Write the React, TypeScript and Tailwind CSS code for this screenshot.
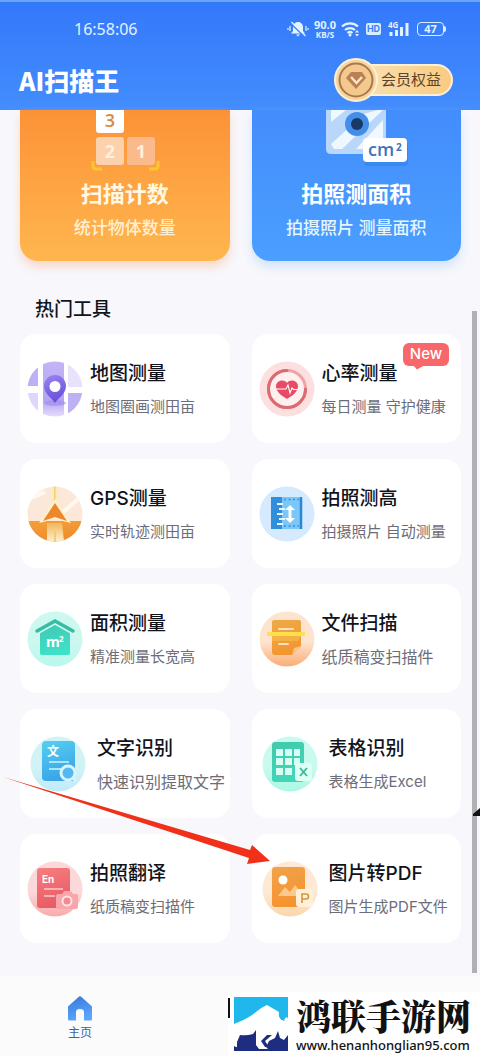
import type { ReactNode } from "react";

function Disc({ id, from, to, children }: { id: string; from: string; to: string; children: ReactNode }) {
  return (
    <svg viewBox="0 0 56 56" className="size-14 shrink-0" aria-hidden="true">
      <defs>
        <linearGradient id={`${id}-bg`} x1="0" y1="0" x2="0" y2="1">
          <stop offset="0.55" stopColor={from} />
          <stop offset="1" stopColor={to} />
        </linearGradient>
        <clipPath id={`${id}-clip`}>
          <circle cx="28" cy="28" r="27.5" />
        </clipPath>
      </defs>
      <circle cx="28" cy="28" r="27.5" fill={`url(#${id}-bg)`} />
      {children}
    </svg>
  );
}

function Gradient({ id, a, b }: { id: string; a: string; b: string }) {
  return (
    <linearGradient id={id} x1="0" y1="0" x2="0.3" y2="1">
      <stop offset="0" stopColor={a} />
      <stop offset="1" stopColor={b} />
    </linearGradient>
  );
}

const MapIcon = () => (
  <Disc id="map" from="#ffffff" to="#ffffff">
    <defs>
      <Gradient id="map-pin" a="#9a86ee" b="#6a4fdc" />
      <linearGradient id="map-road" x1="0" y1="0" x2="0" y2="1">
        <stop offset="0" stopColor="#c3b5f6" />
        <stop offset="0.7" stopColor="#b5a4f2" />
        <stop offset="1" stopColor="#e6defd" />
      </linearGradient>
    </defs>
    <g clipPath="url(#map-clip)">
      <path d="M0 0h11v25H0z" fill="#bfb0f3" />
      <path d="M0 32h11v24H0z" fill="#ded6fb" />
      <path d="M16 0h21v56H16z" fill="url(#map-road)" />
      <path d="M41 0h15v26H41z" fill="#e8e2fd" />
      <path d="M41 32h15v24H41z" fill="#bfb0f3" />
    </g>
    <ellipse cx="28" cy="42" rx="11" ry="3" fill="#9d87eb" opacity="0.6" />
    <path d="M28 42c-3-5-11-9-11-17a11 11 0 0 1 22 0c0 8-8 12-11 17z" fill="url(#map-pin)" />
    <circle cx="28" cy="25.500" r="5.500" fill="#fff" />
  </Disc>
);

const HeartIcon = () => (
  <Disc id="heart" from="#fddfe0" to="#fddfe0">
    <circle cx="28" cy="28" r="18.500" fill="#fff0f0" stroke="#eda4a7" strokeWidth="3" />
    <path d="M46.500 28A18.500 18.500 0 1 1 28 9.500" fill="none" stroke="#dc6b71" strokeWidth="3" strokeLinecap="round" />
    <path d="M28 38c-5-3-11-7-11-12.500 0-6 7.500-8 11-3.500 3.500-4.500 11-2.500 11 3.500C39 31 33 35 28 38z" fill="#e94b66" />
    <path d="M17 28h10l2-4 2 8 2-5 1.500 1.500H39" fill="none" stroke="#fff" strokeWidth="1.100" />
  </Disc>
);

const GpsIcon = () => (
  <Disc id="gps" from="#fce8d9" to="#fce8d9">
    <defs>
      <Gradient id="gps-land" a="#f5a03a" b="#ee8c2c" />
      <linearGradient id="gps-road" x1="0" y1="0" x2="0" y2="1">
        <stop offset="0" stopColor="#f1b75d" />
        <stop offset="1" stopColor="#fdf1cf" />
      </linearGradient>
    </defs>
    <g clipPath="url(#gps-clip)">
      <path d="M34 28 52 12M0 14 18 6" stroke="#fff8ef" strokeWidth="4" />
      <path d="M0 35h56v21H0z" fill="url(#gps-land)" />
      <path d="M25 0h6v20h-6z" fill="#fbecbf" />
      <path d="M20 37h15l2 19H20z" fill="url(#gps-road)" />
      <path d="M27 0h1.500v18H27zM27 42h2v14h-2z" fill="#f4cc79" />
    </g>
    <path d="m28 13 16 24-16-4-16 4z" fill="#fff0ca" />
    <path d="m28 17 12 18-12-4-12 4z" fill="#ed872b" />
  </Disc>
);

const RulerIcon = () => (
  <Disc id="ruler" from="#d5eaff" to="#d5eaff">
    <path d="M12 11h31v32H12z" fill="#7cc7f9" />
    <path d="M12 11h11v32H12z" fill="#318edb" />
    <path d="M18 18h6M20 23h6M18 28h6M20 33h6M18 38h6" stroke="#e8f6ff" strokeWidth="1.800" />
    <path d="M25 13.500h15M25 40h15" stroke="#2c91e1" strokeWidth="1.600" strokeDasharray="2 2.500" />
    <path d="M42 11v32" stroke="#2b87d4" strokeWidth="2.500" />
    <path d="m31 19 5 5h-3.500v8H36l-5 5-5-5h3.500v-8H26z" fill="#fff" />
  </Disc>
);

const HouseIcon = () => (
  <Disc id="house" from="#ccf8ef" to="#b8f8ed">
    <defs>
      <Gradient id="house-body" a="#3fc8b2" b="#3fe0c8" />
    </defs>
    <path d="m13 22 15-9 15 9v20q0 2-2 2H15q-2 0-2-2z" fill="url(#house-body)" />
    <path d="m10 20 18-10 18 10" fill="none" stroke="#ccf8ef" strokeWidth="7" />
    <path d="m10 20 18-10 18 10" fill="none" stroke="#35bda6" strokeWidth="3.500" strokeLinecap="round" />
    <text x="19" y="36" fontSize="14" fontWeight="700" fill="#fff" fontFamily="Open Sans, sans-serif">m</text>
    <text x="32" y="31" fontSize="8" fontWeight="700" fill="#fff" fontFamily="Open Sans, sans-serif">2</text>
  </Disc>
);

const ScanIcon = () => (
  <Disc id="scan" from="#fde4cf" to="#faac74">
    <defs>
      <Gradient id="scan-page" a="#efaa48" b="#f39631" />
    </defs>
    <path d="M15 9h25q2 0 2 2v24l-9 9H16q-3 0-3-3V11q0-2 2-2z" fill="url(#scan-page)" />
    <path d="M20 18h14M20 33h9" stroke="#ffe1ba" strokeWidth="2" strokeLinecap="round" />
    <path d="m33 44 9-9-7 2z" fill="#fbc187" />
    <path d="M13 25h29l-3 5H13z" fill="#fac44e" opacity="0.5" />
    <path d="M8 21h38v4H8z" fill="#ffdf50" />
  </Disc>
);

const TextIcon = () => (
  <Disc id="text" from="#d1f3f5" to="#c0ebfb">
    <defs>
      <Gradient id="text-page" a="#56cfef" b="#3aa5e9" />
    </defs>
    <rect x="12" y="5" width="33" height="40" rx="4" fill="url(#text-page)" />
    <text x="17" y="20" fontSize="12" fontWeight="700" fill="#fff" fontFamily="Noto Sans CJK SC, sans-serif">文</text>
    <path d="M19 26h20M19 33h12" stroke="#a8e6fb" strokeWidth="2" />
    <circle cx="38" cy="37" r="7" fill="#55b8ee" stroke="#d7f4ff" strokeWidth="3" />
    <path d="m43 42 2 2" stroke="#d7f4ff" strokeWidth="3" strokeLinecap="round" />
  </Disc>
);

const TableIcon = () => (
  <Disc id="table" from="#c9faef" to="#aaf8e5">
    <defs>
      <Gradient id="table-page" a="#42c9aa" b="#41d6b8" />
    </defs>
    <rect x="10" y="6" width="32" height="40" rx="3" fill="url(#table-page)" />
    <path
      d="M14 13h7v7h-7zM23 13h7v7h-7zM32 13h6v7h-6zM14 22h7v7h-7zM23 22h7v7h-7zM32 22h6v7h-6zM14 32h7v7h-7zM23 32h7v7h-7z"
      fill="#d9fff5"
    />
    <rect x="33" y="27" width="17" height="18" rx="3" fill="#dffff6" />
    <path d="m38 32 7 8m0-8-7 8" stroke="#38b896" strokeWidth="1.800" />
  </Disc>
);

const TranslateIcon = () => (
  <Disc id="trans" from="#fbd9da" to="#fba9ab">
    <defs>
      <Gradient id="trans-page" a="#f57f80" b="#ea5c65" />
    </defs>
    <rect x="10" y="7" width="33" height="40" rx="3" fill="url(#trans-page)" />
    <text x="15" y="22" fontSize="10" fontWeight="700" fill="#fff" fontFamily="Inter, sans-serif">En</text>
    <path d="M17 28h19M17 35h11" stroke="#f9b2b4" strokeWidth="2" />
    <path d="M31 33h4l2-3h7l2 3h3q2 0 2 2v11q0 2-2 2H31q-2 0-2-2V35q0-2 2-2z" fill="#f8a6ab" />
    <circle cx="40" cy="40" r="4.500" fill="#ef8b92" stroke="#ffe3e5" strokeWidth="2" />
  </Disc>
);

const PictureIcon = () => (
  <Disc id="pic" from="#fee9d4" to="#fbd6ab">
    <defs>
      <Gradient id="pic-page" a="#f0a34c" b="#f6932f" />
    </defs>
    <rect x="10" y="6" width="33" height="40" rx="3" fill="url(#pic-page)" />
    <circle cx="21" cy="19" r="4.500" fill="#fff" />
    <path d="m16 35 7-9 5 5 5-7 9 11z" fill="#fbc88d" />
    <rect x="34" y="28" width="17" height="18" rx="3" fill="#fff0d9" />
    <path d="M40 42v-9h4a2.500 2.500 0 0 1 0 5h-4" fill="none" stroke="#d39545" strokeWidth="1.600" />
  </Disc>
);

type Tool = { title: string; note: string; icon: ReactNode; inset?: boolean; large?: boolean; isNew?: boolean };

const tools: Tool[] = [
  { title: "地图测量", note: "地图圈画测田亩", icon: <MapIcon /> },
  { title: "心率测量", note: "每日测量 守护健康", icon: <HeartIcon />, isNew: true },
  { title: "GPS测量", note: "实时轨迹测田亩", icon: <GpsIcon /> },
  { title: "拍照测高", note: "拍摄照片 自动测量", icon: <RulerIcon /> },
  { title: "面积测量", note: "精准测量长宽高", icon: <HouseIcon /> },
  { title: "文件扫描", note: "纸质稿变扫描件", icon: <ScanIcon />, large: true },
  { title: "文字识别", note: "快速识别提取文字", icon: <TextIcon />, inset: true, large: true },
  { title: "表格识别", note: "表格生成Excel", icon: <TableIcon />, inset: true },
  { title: "拍照翻译", note: "纸质稿变扫描件", icon: <TranslateIcon /> },
  { title: "图片转PDF", note: "图片生成PDF文件", icon: <PictureIcon />, inset: true },
];

function ToolCard({ tool }: { tool: Tool }) {
  return (
    <button
      type="button"
      className={`relative flex items-center rounded-2xl bg-white py-6 text-left whitespace-nowrap ${tool.inset ? "gap-[11px] pl-[10px]" : "gap-[7px] pl-[7px]"}`}
    >
      {tool.icon}
      <span className="flex flex-col gap-[9px] pt-1">
        <span className="text-[19px] leading-6 font-medium text-[#11131b]">{tool.title}</span>
        <span className={`leading-6 text-[#6c6d78] ${tool.large ? "text-[16px]" : "text-[15px]"}`}>{tool.note}</span>
      </span>
      {tool.isNew && (
        <span className="absolute top-[9px] right-3 flex h-[23px] w-[46px] items-center justify-center rounded-md bg-[#f8686b] text-[15px] font-medium text-white">
          New
          <svg viewBox="0 0 12 5" className="absolute top-[22px] left-[10px] h-[5px] w-3" aria-hidden="true">
            <path d="M0 0h12L4 4.500z" fill="#f8686b" />
          </svg>
        </span>
      )}
    </button>
  );
}

function StatusBar() {
  return (
    <div className="flex h-[54px] items-center justify-between pr-[36px] pl-[74px] text-[#e2f3ff]">
      <time className="font-['Noto_Sans',sans-serif] text-[16px]">16:58:06</time>
      <div className="flex items-center gap-[5px]">
        <svg viewBox="0 0 22 18" className="h-[18px] w-[22px]" aria-label="静音">
          <path d="M11 2a5 5 0 0 1 5 5v4l2 2.500H4L6 11V7a5 5 0 0 1 5-5zM9 14.500h4l-2 2z" fill="currentColor" />
          <path d="m3 3 14 13" stroke="#3a80fa" strokeWidth="1.500" />
          <path d="m4.500 2 14 14M3 6v5M1 8v2M19 6v5M21 8v2" stroke="currentColor" strokeWidth="1.200" />
        </svg>
        <span className="flex flex-col items-center font-['Noto_Sans',sans-serif] font-bold">
          <span className="text-[11px] leading-[11px]">90.0</span>
          <span className="text-[8px] leading-[9px]">KB/S</span>
        </span>
        <svg viewBox="0 0 20 16" className="h-4 w-5" aria-label="无线网络">
          <path d="M1 5.500a12 12 0 0 1 16 0M4 9a7.500 7.500 0 0 1 10 0M6.500 12a4 4 0 0 1 5 0" fill="none" stroke="currentColor" strokeWidth="2.200" />
          <circle cx="9" cy="14" r="1.500" fill="currentColor" />
          <path d="m14 11.500 2-2.500 2 2.500zM14 13h4l-2 2.500z" fill="currentColor" />
        </svg>
        <span className="flex h-3 w-[15px] items-center justify-center rounded-xs bg-[#d9efff] text-[9px] font-bold text-[#3d82f7]">HD</span>
        <svg viewBox="0 0 22 18" className="ml-[2px] h-[18px] w-[22px]" aria-label="4G 信号">
          <text x="0" y="8" fontSize="8" fontWeight="700" fill="currentColor" fontFamily="Noto Sans, sans-serif">4G</text>
          <path d="M1.500 12h3v4h-3zM7 10h3v6H7zM12 7h3v9h-3zM17.500 3h3v13h-3z" fill="currentColor" />
        </svg>
        <span className="relative ml-[2px] flex h-[14px] w-[27px] items-center justify-center rounded-sm border border-[#d9efff] font-['Noto_Sans',sans-serif] text-[11px] leading-3 font-bold">
          47
          <span className="absolute top-[3px] -right-[3px] h-[6px] w-[2px] rounded-r bg-[#d9efff]" />
        </span>
      </div>
    </div>
  );
}

function Header() {
  return (
    <header className="h-[110px] border-t-2 border-[#6ba4fa] bg-linear-to-b from-[#3478fa] to-[#438dfd]">
      <StatusBar />
      <div className="flex h-12 items-center justify-between pr-[27px] pl-[19px]">
        <h1 className="font-['Noto_Sans_CJK_SC',sans-serif] text-[25px] leading-8 font-black text-white">AI扫描王</h1>
        <button type="button" className="flex items-center">
          <svg viewBox="0 0 44 44" className="relative size-11" aria-hidden="true">
            <circle cx="22" cy="22" r="21" fill="#f7d59c" stroke="#fff0d1" strokeWidth="2" />
            <circle cx="22" cy="22" r="16.500" fill="#f3c98d" stroke="#a8794e" strokeWidth="2" />
            <path d="M17 14h11l4 6-10 11-10-11z" fill="#b98055" />
            <path d="m17 19 5.500 6 5.500-6" fill="none" stroke="#fbe6c0" strokeWidth="2.500" />
          </svg>
          <span className="-ml-6 flex h-8 items-center rounded-full border-2 border-[#fff0d0] bg-linear-to-r from-[#f8e2b5] to-[#f9cb83] pr-[10px] pl-[25px] text-[15px] text-[#5f4329]">
            会员权益
          </span>
        </button>
      </div>
    </header>
  );
}

function CountArt() {
  return (
    <svg viewBox="0 0 72 62" className="h-[62px] w-[72px] overflow-visible" aria-hidden="true">
      <path d="M7 0h28v20q0 3-3 3H10q-3 0-3-3z" fill="#fff" />
      <rect x="7" y="27" width="28" height="28" rx="3" fill="#fcd1ad" />
      <rect x="38" y="27" width="28" height="28" rx="3" fill="#fbba8b" />
      <g fontFamily="Open Sans, sans-serif" fontSize="18" textAnchor="middle">
        <text x="21" y="17" fontWeight="600" fill="#d68b43">3</text>
        <text x="21" y="48" fontWeight="700" fill="#fff1dd">2</text>
        <text x="52" y="48" fontWeight="700" fill="#fff1dd">1</text>
      </g>
      <path d="M4 51v5q0 3 3 3h6M69 51v5q0 3-3 3h-6" fill="none" stroke="#fbc62e" strokeWidth="3" />
    </svg>
  );
}

function AreaArt() {
  return (
    <svg viewBox="0 0 104 62" className="h-[62px] w-[104px]" aria-hidden="true">
      <path d="M22 0h60v39q0 5-5 5H27q-5 0-5-5z" fill="#b9d7fb" />
      <path d="M27 0h15L27 12zM27 34 60 4l13-4h6L38 39h-8zM52 39 79 10v18L68 39z" fill="#eff7ff" />
      <circle cx="53" cy="14" r="12" fill="#438ee9" />
      <circle cx="53" cy="14" r="6" fill="#173963" />
      <rect x="60" y="31" width="44" height="25" rx="4" fill="#2977dc" opacity="0.4" />
      <rect x="59" y="28" width="44" height="24" rx="4" fill="#fff" />
      <text x="64" y="46" fontSize="18" fill="#3e76b8" fontFamily="Open Sans, sans-serif" fontWeight="600">cm</text>
      <text x="92" y="41" fontSize="10" fill="#3e76b8" fontFamily="Open Sans, sans-serif" fontWeight="700">2</text>
    </svg>
  );
}

export default function App() {
  return (
    <div className="relative flex min-h-screen flex-col overflow-hidden bg-[#f7f7fc] font-['Inter','Noto_Sans_CJK_SC',sans-serif]">
      <Header />
      <main className="flex-1 pr-[19px] pb-[33px] pl-5">
        <section className="grid grid-cols-2 gap-x-[22px] text-center text-white">
          <button type="button" className="flex h-[151px] flex-col items-center rounded-b-[18px] bg-linear-to-b from-[#fc9237] to-[#ffb64e] shadow-[0_6px_10px_#f9d9c9]">
            <CountArt />
            <span className="mt-[6px] text-[22px] leading-8 font-bold text-[#fff8e5]">扫描计数</span>
            <span className="mt-[6px] text-[17px] leading-6 font-medium text-[#fff0d1]">统计物体数量</span>
          </button>
          <button type="button" className="flex h-[151px] flex-col items-center rounded-b-[18px] bg-linear-to-b from-[#438cfc] to-[#4b9fff] shadow-[0_6px_10px_#d4e4fa]">
            <AreaArt />
            <span className="mt-[6px] text-[22px] leading-8 font-bold">拍照测面积</span>
            <span className="mt-[6px] text-[17px] leading-6 font-medium text-[#e5f5ff]">拍摄照片 测量面积</span>
          </button>
        </section>
        <h2 className="mt-[37px] mb-3 pl-[15px] text-[19px] leading-6 font-medium text-[#11131b]">热门工具</h2>
        <section className="grid grid-cols-2 gap-x-[22px] gap-y-4">
          {tools.map((tool) => (
            <ToolCard key={tool.title} tool={tool} />
          ))}
        </section>
      </main>
      <nav className="flex h-[80px] items-start bg-[#fbfbfb] pt-[19px] pl-[66px]">
        <a href="#home" className="flex w-7 flex-col items-center gap-1 text-[12px] leading-4 text-[#3b62a8]">
          <svg viewBox="0 0 26 26" className="size-[26px]" aria-hidden="true">
            <defs>
              <Gradient id="home-fill" a="#3678d8" b="#5aa5fd" />
            </defs>
            <path d="M1 11.500 11.500 2q1.500-1.300 3 0L25 11.500V24q0 1.500-1.500 1.500H17V17q0-3-4-3t-4 3v8.500H2.500Q1 25.500 1 24z" fill="url(#home-fill)" />
          </svg>
          <span>主页</span>
        </a>
      </nav>

      <div className="absolute top-[311px] right-[3px] bottom-[83px] w-[5px] bg-[#b1b1b3]" />
      <svg viewBox="0 0 7 8" className="absolute top-[808px] right-0 h-2 w-[7px]" aria-hidden="true">
        <path d="m0 6 7-6v8H0z" fill="#111" />
      </svg>
      <svg viewBox="0 0 272 92" className="pointer-events-none absolute top-[775px] left-0 h-[92px] w-[272px]" aria-hidden="true">
        <path d="M3 2 250 75l2-5 18 16-23 3 2-6z" fill="#f03018" />
      </svg>

      <aside className="absolute right-0 bottom-0 flex h-[64px] w-[252px] items-center gap-2 bg-white pl-[6px]">
        <span className="absolute top-[6px] left-0 h-[20px] w-[2px] bg-[#111]" />
        <svg viewBox="0 0 54 54" className="size-[54px] shrink-0" aria-hidden="true">
          <path d="M0 0h54v34H0z" fill="#20b7ed" />
          <path d="M0 32h54v22H0z" fill="#1e2d80" />
          <path d="M0 27Q14 22 22 15q6-5 11-7l12 7q-1 5 3 8l5-3 1 2v16l-4 5-4-2-2-7-3 7-6 3-3 6 2 2h-9l-3-4V33l-3 4q-7 2-13 1l-3 7v5H2l-2-1z" fill="#fff" />
          <path d="M48 11q-1 4 2 6 2 3 0 7-5-2-5-6 0-4 3-7z" fill="#20b7ed" />
          <path d="m8 41-4 5 3 4h3l-2-4 4-5zM33 38l-6 6 4 6h4l-4-6 7-6z" fill="#1e2d80" />
        </svg>
        <div className="flex flex-col whitespace-nowrap text-[#111]">
          <span className="font-['Noto_Serif_CJK_SC','Noto_Sans_CJK_SC',serif] text-[35px] leading-[42px] font-black">鸿联手游网</span>
          <span className="font-['Noto_Sans',sans-serif] text-[13px] leading-[18px] font-medium">www.henanhonglian95.com</span>
        </div>
      </aside>
    </div>
  );
}
